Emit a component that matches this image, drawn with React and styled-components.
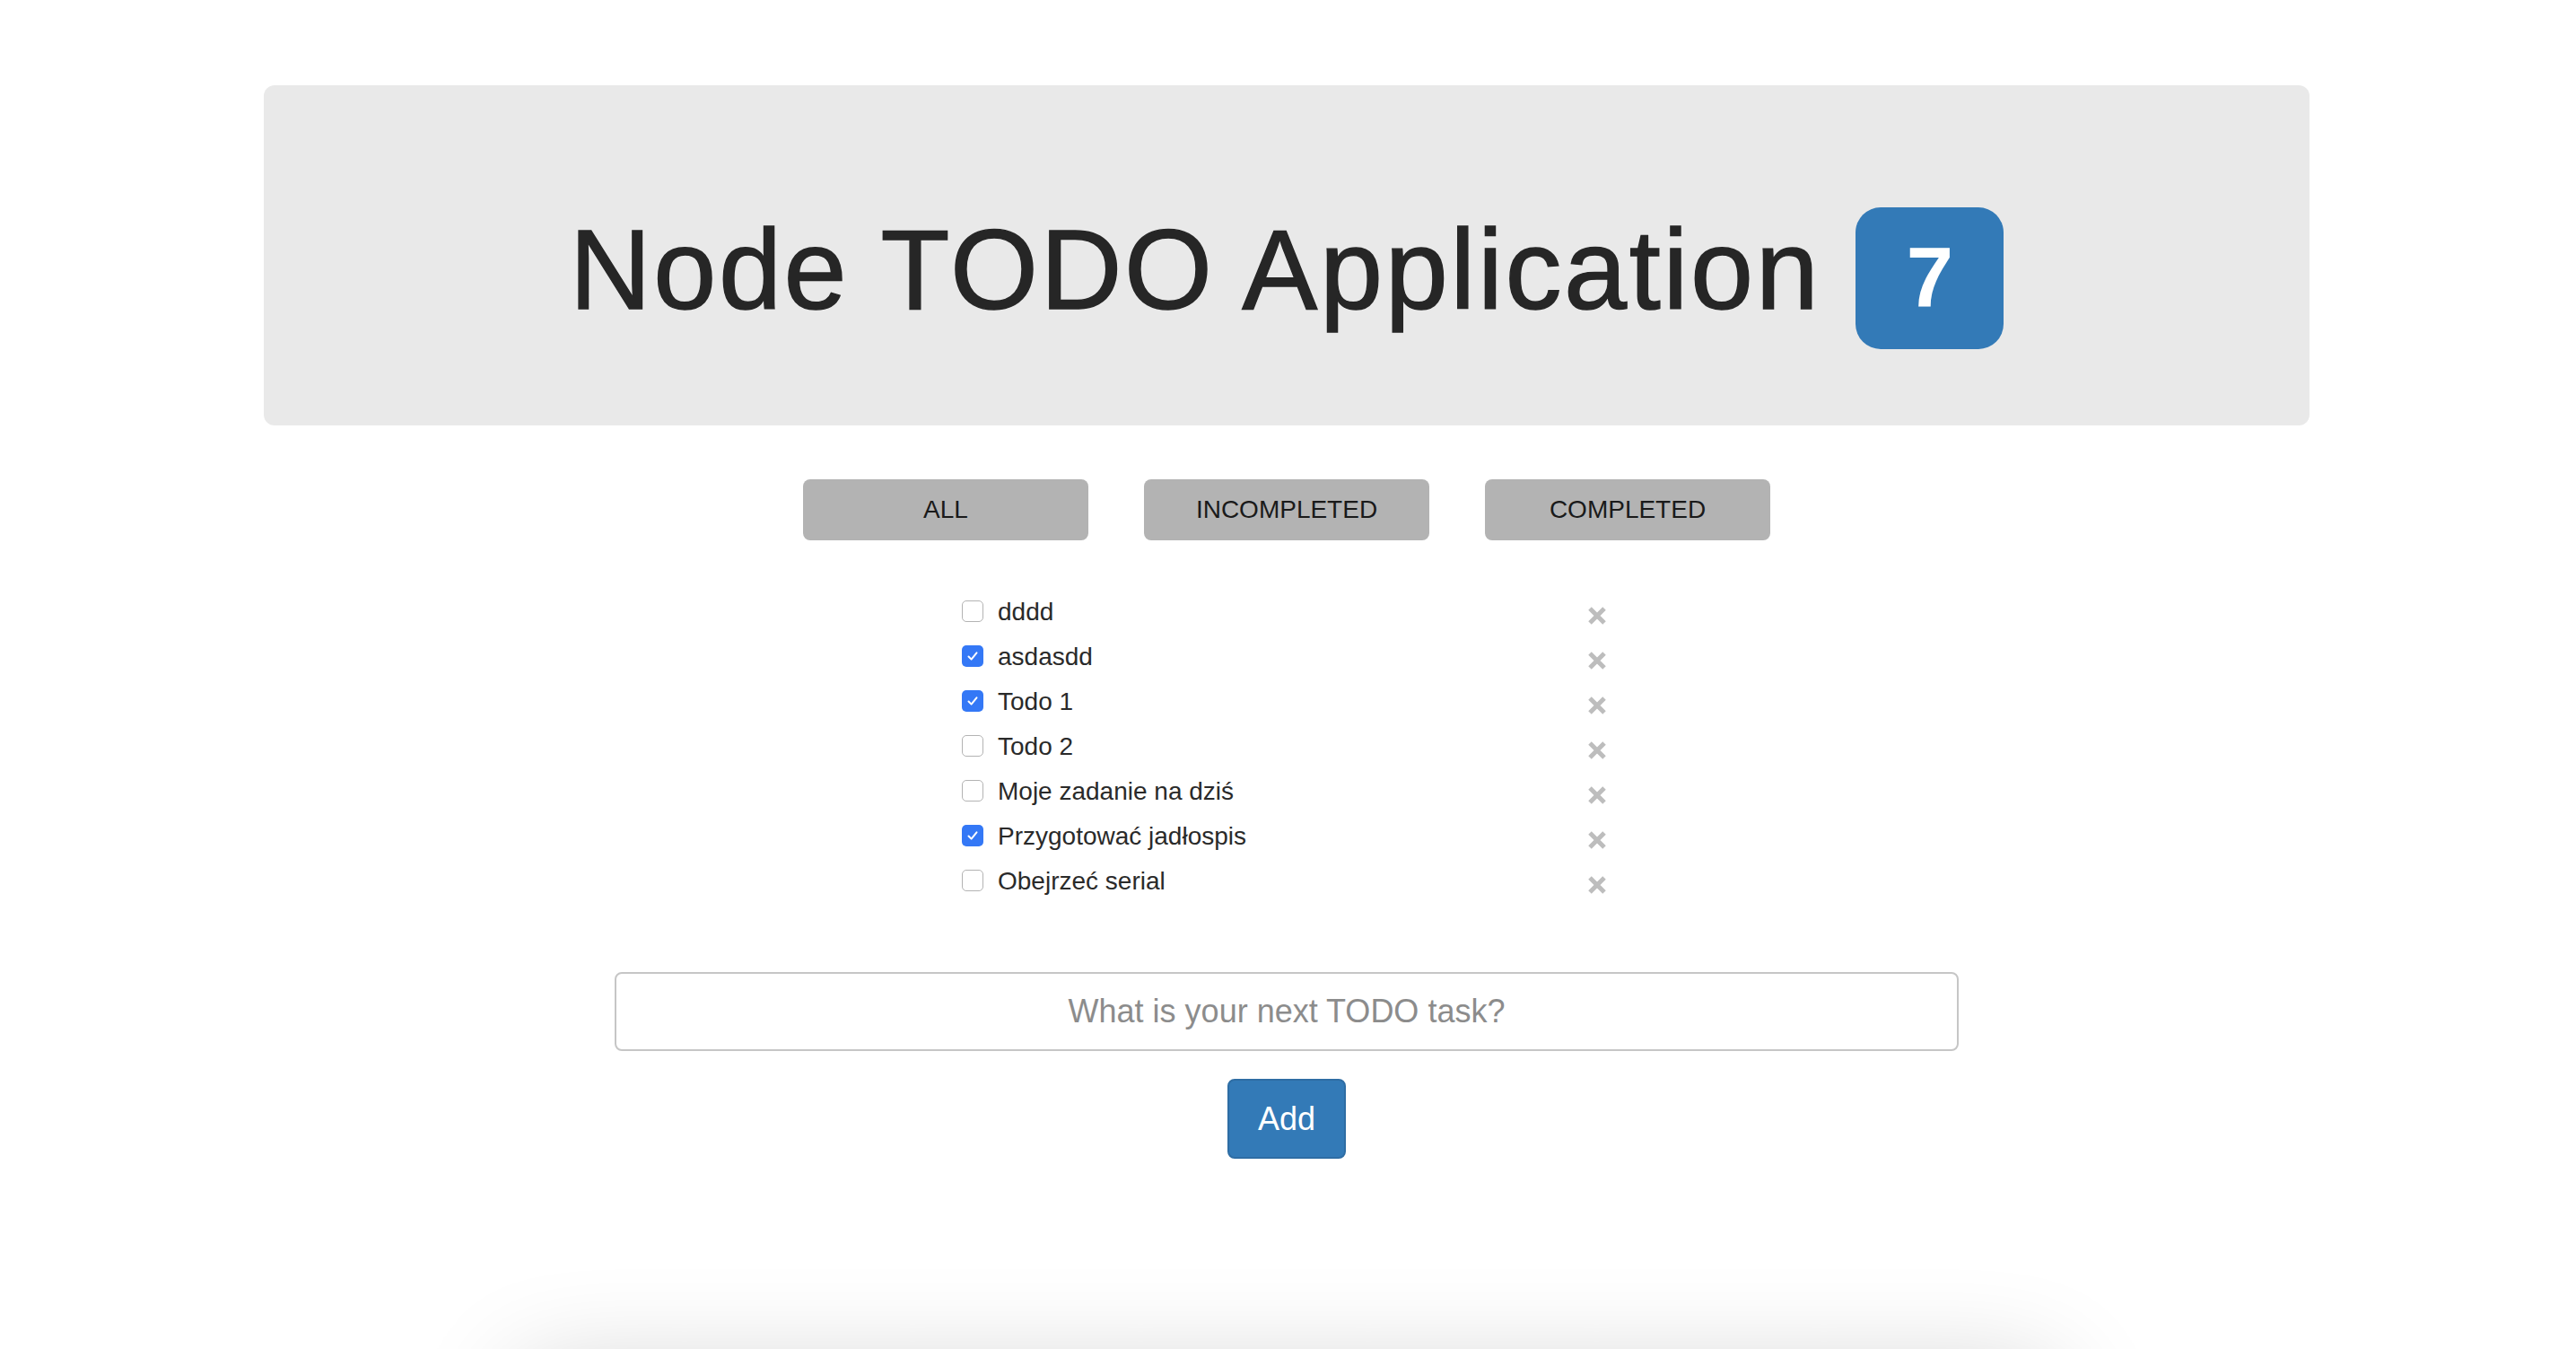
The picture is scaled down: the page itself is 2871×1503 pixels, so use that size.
import React, { useState } from 'react'
import styled, { createGlobalStyle } from 'styled-components'

const GlobalStyle = createGlobalStyle`
  html, body {
    margin: 0;
    padding: 0;
    overflow: hidden;
    background: #fff;
  }
  body {
    font-family: "Liberation Sans", Arial, Helvetica, sans-serif;
    color: #333;
  }
  * { box-sizing: border-box; }
`

const todosData = [
  { text: 'dddd', done: false },
  { text: 'asdasdd', done: true },
  { text: 'Todo 1', done: true },
  { text: 'Todo 2', done: false },
  { text: 'Moje zadanie na dziś', done: false },
  { text: 'Przygotować jadłospis', done: true },
  { text: 'Obejrzeć serial', done: false },
]

function App() {
  const [todos, setTodos] = useState(todosData)
  const [filter, setFilter] = useState('all')

  const toggle = (index) => {
    setTodos(todos.map((t, i) => (i === index ? { ...t, done: !t.done } : t)))
  }

  return (
    <>
      <GlobalStyle />
      <Container>
        <Jumbotron>
          <Title>
            <TitleText>Node TODO Application</TitleText>
            <Badge>{todos.length}</Badge>
          </Title>
        </Jumbotron>

        <Filters>
          <FilterButton onClick={() => setFilter('all')}>ALL</FilterButton>
          <FilterButton onClick={() => setFilter('incompleted')}>INCOMPLETED</FilterButton>
          <FilterButton onClick={() => setFilter('completed')}>COMPLETED</FilterButton>
        </Filters>

        <TodoList>
          {todos.map((todo, index) => (
            <TodoRow key={index}>
              <Check $checked={todo.done} onClick={() => toggle(index)}>
                {todo.done && (
                  <svg width="16" height="16" viewBox="0 0 16 16">
                    <path d="M3.5 8.5 L6.6 11.6 L12.5 4.3" fill="none" stroke="#fff" strokeWidth="2" strokeLinecap="round" strokeLinejoin="round" />
                  </svg>
                )}
              </Check>
              <TodoText>{todo.text}</TodoText>
              <Remove>
                <svg width="22" height="22" viewBox="0 0 22 22">
                  <path d="M3 3 L19 19 M19 3 L3 19" stroke="#bdbdbd" strokeWidth="5" />
                </svg>
              </Remove>
            </TodoRow>
          ))}
        </TodoList>

        <TaskInput placeholder="What is your next TODO task?" />
        <AddButton>Add</AddButton>

        <Footer />
      </Container>
    </>
  )
}

export default App

const Container = styled.div`
  width: 2340px;
  margin: 0 0 0 264px;
  padding: 0 30px;
`

const Jumbotron = styled.div`
  margin-top: 95px;
  height: 379px;
  background: #e9e9e9;
  border-radius: 12px;
  display: flex;
  justify-content: center;
  align-items: flex-start;
  padding-top: 136px;
`

const Title = styled.h1`
  margin: 0;
  display: flex;
  align-items: flex-start;
  gap: 39px;
  font-weight: 400;
`

const TitleText = styled.span`
  margin-top: 7px;
  font-size: 126px;
  line-height: 1;
  letter-spacing: 2.6px;
  color: #262626;
  -webkit-text-stroke: 1.4px #262626;
`

const Badge = styled.span`
  width: 165px;
  height: 158px;
  border-radius: 28px;
  background: #337ab7;
  color: #fff;
  font-weight: 700;
  font-size: 94px;
  line-height: 1;
  display: flex;
  align-items: center;
  justify-content: center;
`

const Filters = styled.div`
  margin-top: 60px;
  display: flex;
  justify-content: center;
  gap: 62px;
`

const FilterButton = styled.button`
  width: 318px;
  height: 68px;
  border: none;
  border-radius: 8px;
  background: #b3b3b3;
  color: #1a1a1a;
  font-family: "Liberation Sans", Arial, sans-serif;
  font-size: 28px;
  cursor: pointer;
`

const TodoList = styled.div`
  width: 724px;
  margin: 54px auto 0;
  padding-right: 5px;
  display: flex;
  flex-direction: column;
`

const TodoRow = styled.div`
  height: 50px;
  display: flex;
  align-items: center;
`

const Check = styled.span`
  width: 24px;
  height: 24px;
  flex: none;
  border-radius: 5px;
  display: flex;
  align-items: center;
  justify-content: center;
  background: ${(p) => (p.$checked ? '#3478f6' : '#fff')};
  border: ${(p) => (p.$checked ? 'none' : '1.5px solid #b3b3b3')};
  cursor: pointer;
`

const TodoText = styled.span`
  margin-left: 16px;
  margin-top: 2px;
  font-size: 28px;
  color: #2a2a2a;
  flex: 1;
`

const Remove = styled.span`
  display: flex;
  margin-top: 10px;
  cursor: pointer;
`

const TaskInput = styled.input`
  display: block;
  width: 1498px;
  height: 88px;
  margin: 77px auto 0;
  border: 2px solid #c6c6c6;
  border-radius: 8px;
  font-family: "Liberation Sans", Arial, sans-serif;
  font-size: 36px;
  text-align: center;
  color: #333;
  outline: none;

  &::placeholder {
    color: #8c8c8c;
  }
`

const AddButton = styled.button`
  display: block;
  width: 132px;
  height: 89px;
  margin: 31px auto 0;
  background: #337ab7;
  border: 2px solid #2e6da4;
  border-radius: 8px;
  color: #fff;
  font-family: "Liberation Sans", Arial, sans-serif;
  font-size: 36px;
  cursor: pointer;
`

const Footer = styled.div`
  width: 1710px;
  height: 300px;
  margin: 239px auto 0;
  background: #fff;
  box-shadow: 0 0 120px rgba(0, 0, 0, 0.2);
`
